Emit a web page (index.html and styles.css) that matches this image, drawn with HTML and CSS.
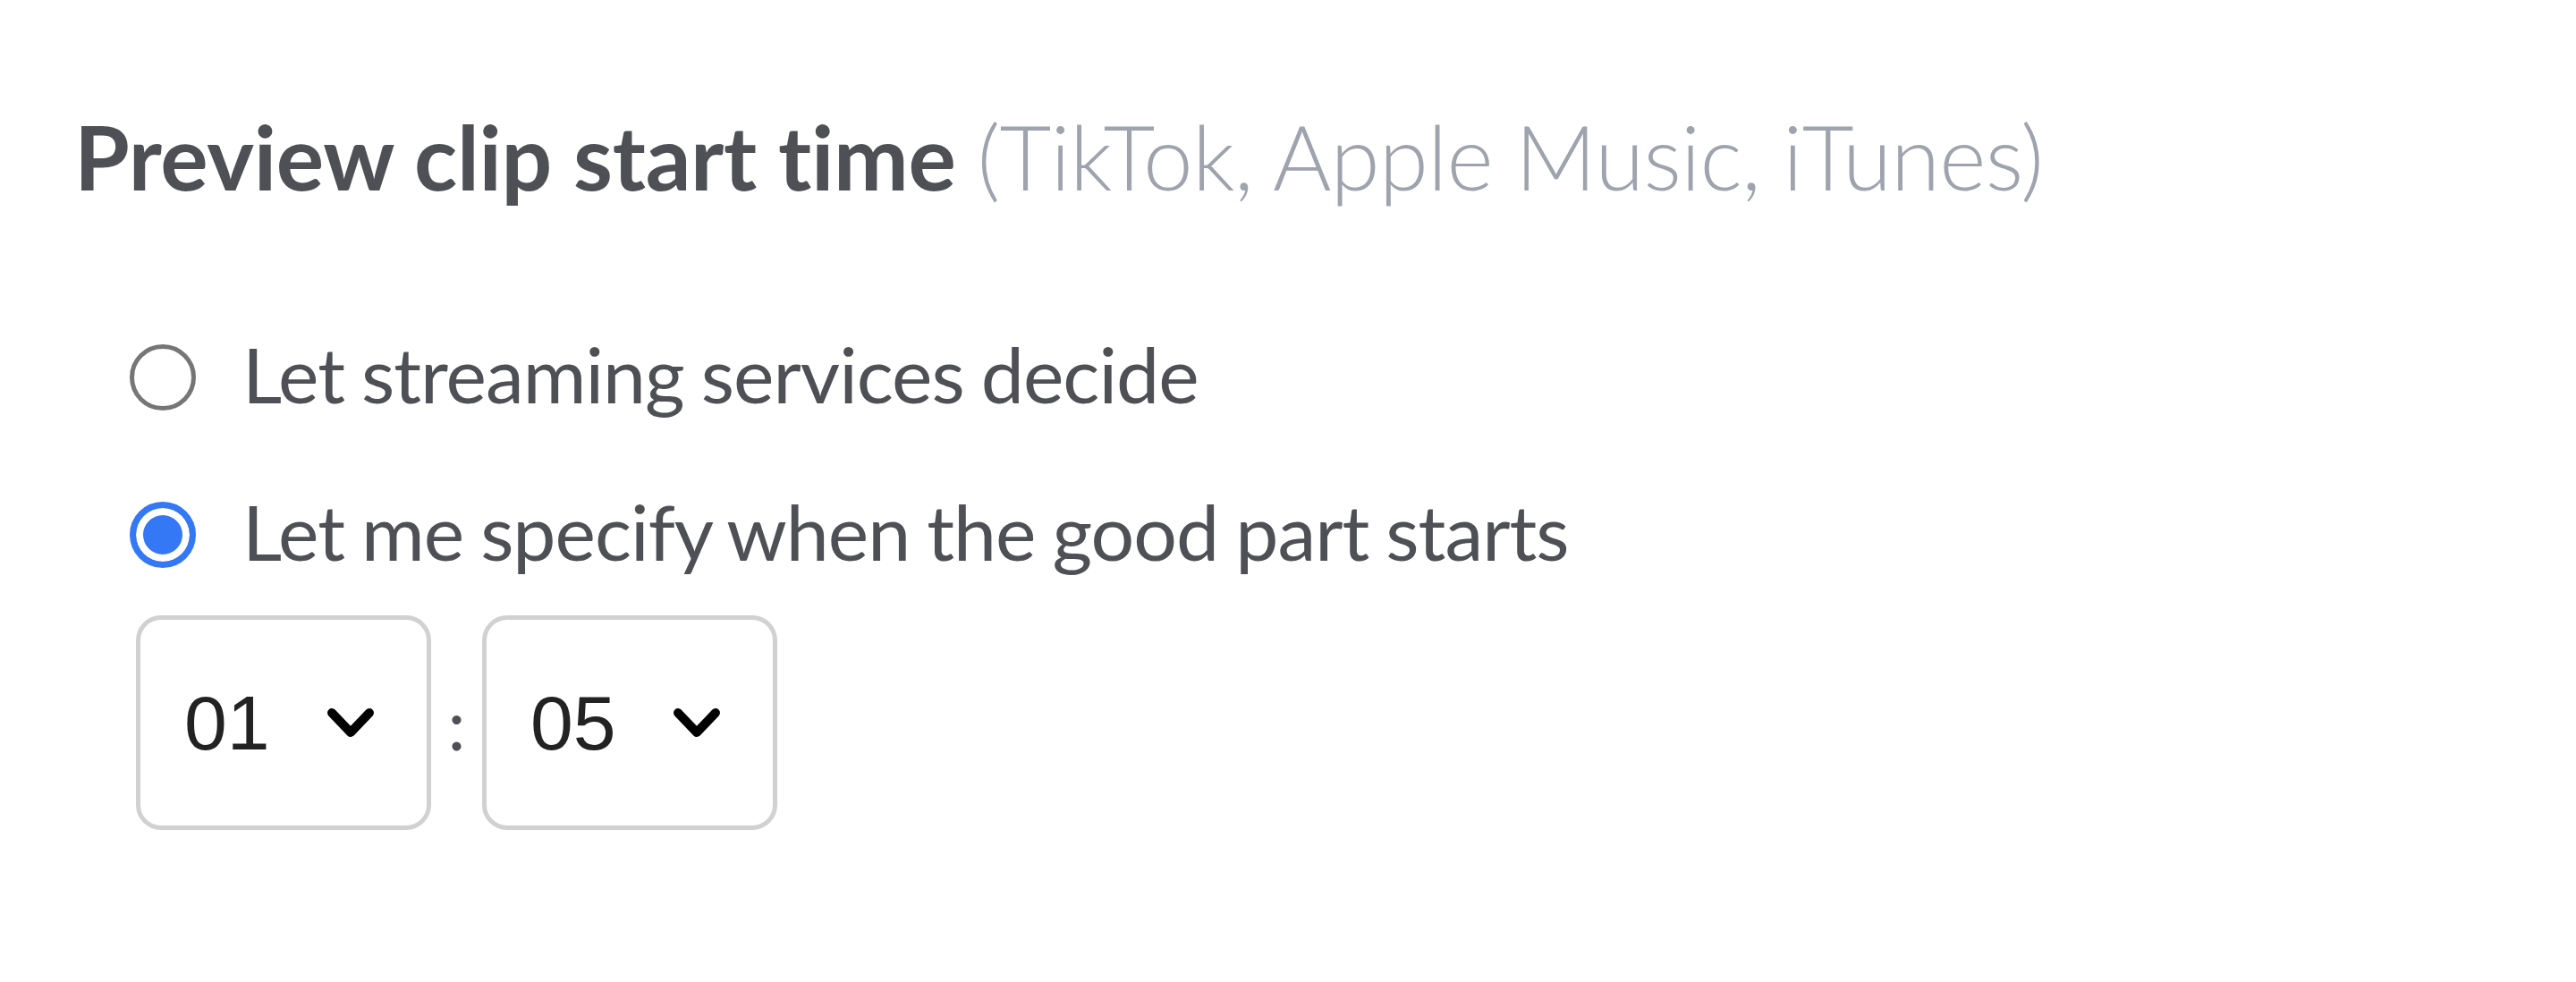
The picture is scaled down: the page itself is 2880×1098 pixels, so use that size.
FILE: index.html
```html
<!DOCTYPE html>
<html lang="en">
<head>
  <meta charset="UTF-8">
  <title>Preview clip start time</title>
  <link rel="stylesheet" href="styles.css">
</head>
<body>
  <div class="container">
    <h2 class="title">Preview clip start time <span class="title-note">(TikTok, Apple Music, iTunes)</span></h2>

    <div class="options">
      <label class="option">
        <span class="radio"></span>
        <span class="option-label">Let streaming services decide</span>
      </label>
      <label class="option">
        <span class="radio checked"></span>
        <span class="option-label">Let me specify when the good part starts</span>
      </label>
    </div>

    <div class="time-picker">
      <div class="select">
        <span class="select-value">01</span>
        <svg class="chevron" viewBox="0 0 54 34" width="54" height="34">
          <polyline points="6,6 27,28 48,6" fill="none" stroke="#000" stroke-width="10" stroke-linecap="round" stroke-linejoin="round"/>
        </svg>
      </div>
      <span class="colon">:</span>
      <div class="select">
        <span class="select-value">05</span>
        <svg class="chevron" viewBox="0 0 54 34" width="54" height="34">
          <polyline points="6,6 27,28 48,6" fill="none" stroke="#000" stroke-width="10" stroke-linecap="round" stroke-linejoin="round"/>
        </svg>
      </div>
    </div>
  </div>
</body>
</html>
```

FILE: styles.css
```css
/* Page */
body {
  margin: 0;
  background: #fff;
  font-family: Lato, "Open Sans", sans-serif;
  font-variant-ligatures: none;
  color: #4f5056;
}

.container {
  padding: 114px 0 0 83px;
}

/* Heading */
.title {
  margin: 0;
  font-size: 100px;
  line-height: 1.2;
  font-weight: 700;
  letter-spacing: -0.3px;
  color: #4f5056;
}

.title-note {
  font-weight: 300;
  letter-spacing: -0.8px;
  word-spacing: -1px;
  color: #9ea3ad;
}

/* Radio options */
.options {
  display: flex;
  flex-direction: column;
  gap: 73px;
  margin-top: 132px;
  padding-left: 62px;
}

.option {
  display: flex;
  align-items: center;
  gap: 52px;
  font-size: 86px;
  line-height: 1.2;
  letter-spacing: -1px;
  word-spacing: -2px;
}

.radio {
  box-sizing: border-box;
  width: 74px;
  height: 74px;
  margin-top: 8px;
  border: 5px solid #767676;
  border-radius: 50%;
  flex-shrink: 0;
}

.radio.checked {
  border: 7px solid #3478f6;
  background: #3478f6;
  box-shadow: inset 0 0 0 8px #fff;
}

/* Time selects */
.time-picker {
  display: flex;
  align-items: center;
  margin-top: 43px;
  padding-left: 69px;
}

.select {
  box-sizing: border-box;
  width: 330px;
  height: 240px;
  display: flex;
  align-items: center;
  justify-content: space-between;
  padding: 0 58px 0 49px;
  border: 5px solid #d1d1d1;
  border-radius: 28px;
}

.select-value {
  font-family: "Liberation Sans", Arial, sans-serif;
  font-size: 86px;
  color: #222;
}

.chevron {
  display: block;
}

.colon {
  width: 57px;
  text-align: center;
  font-size: 80px;
  line-height: 1.2;
  color: #4f5056;
}
```
